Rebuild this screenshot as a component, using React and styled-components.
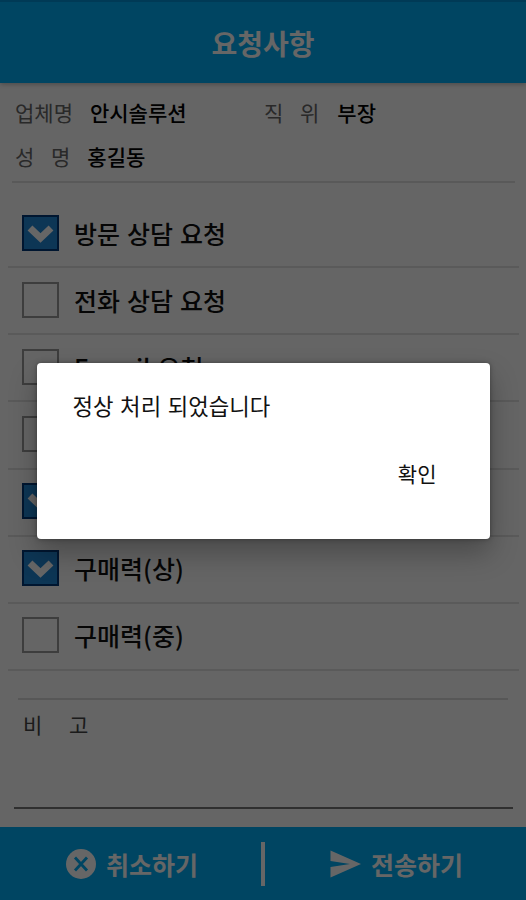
import React, { useState } from 'react'
import styled, { createGlobalStyle } from 'styled-components'

const initialItems = [
    { id: 1, title: '방문 상담 요청', checked: true },
    { id: 2, title: '전화 상담 요청', checked: false },
    { id: 3, title: 'E-mail 요청', checked: false },
    { id: 4, title: '', checked: false },
    { id: 5, title: '', checked: true },
    { id: 6, title: '구매력(상)', checked: true },
    { id: 7, title: '구매력(중)', checked: false },
]

function CheckIcon() {
    return (
        <svg width="28" height="22" viewBox="0 0 28 22">
            <path d="M3 6 L13.5 16 L24 6" fill="none" stroke="#fff" strokeWidth="7" />
        </svg>
    )
}

function CancelIcon() {
    return (
        <svg width="30" height="30" viewBox="0 0 30 30">
            <circle cx="15" cy="15" r="15" fill="#fff" />
            <path d="M9 8.5 L21 21.5 M21 8.5 L9 21.5" stroke="#00acf5" strokeWidth="2.8" />
        </svg>
    )
}

function SendIcon() {
    return (
        <svg width="31" height="28" viewBox="0 0 31 28">
            <path d="M0.5 0.5 L31 14 L0.5 27.5 L0.5 17 L20 14 L0.5 11 Z" fill="#fff" />
        </svg>
    )
}

function App() {
    const [items, setItems] = useState(initialItems)
    const [open, setOpen] = useState(true)

    const toggle = (id) => {
        setItems(items.map((item) => item.id === id ? { ...item, checked: !item.checked } : item))
    }

    return (
        <>
            <GlobalStyle />
            <AppStyled>
                <Header>요청사항</Header>
                <Info>
                    <Field $width="249px">
                        <Label>업체명</Label>
                        <Value $gap="17px">안시솔루션</Value>
                    </Field>
                    <Field>
                        <Label $spread="12px">직 위</Label>
                        <Value $gap="18px">부장</Value>
                    </Field>
                    <Field>
                        <Label $spread="12px">성 명</Label>
                        <Value $gap="17px">홍길동</Value>
                    </Field>
                </Info>
                <List>
                    {items.map((item) => (
                        <Row key={item.id} onClick={() => toggle(item.id)}>
                            <Box $checked={item.checked}>{item.checked && <CheckIcon />}</Box>
                            <span>{item.title}</span>
                        </Row>
                    ))}
                </List>
                <Note>
                    <Label $spread="22px" $dark>비 고</Label>
                </Note>
                <Footer>
                    <Action $left="66px"><CancelIcon />취소하기</Action>
                    <Separator />
                    <Action $left="65px"><SendIcon />전송하기</Action>
                </Footer>
                {open && (
                    <Overlay>
                        <Dialog>
                            <p>정상 처리 되었습니다</p>
                            <button onClick={() => setOpen(false)}>확인</button>
                        </Dialog>
                    </Overlay>
                )}
            </AppStyled>
        </>
    )
}

const GlobalStyle = createGlobalStyle`
    * {
        box-sizing: border-box;
        margin: 0;
        padding: 0;
    }
    body {
        font-family: 'Noto Sans CJK KR', 'Noto Sans', sans-serif;
        background: #fff;
    }
`

const AppStyled = styled.div`
    position: relative;
    width: 526px;
    height: 900px;
    overflow: hidden;
    display: flex;
    flex-direction: column;
    background: #fdfdfd;
`

const Header = styled.header`
    height: 83px;
    flex-shrink: 0;
    display: flex;
    align-items: center;
    justify-content: center;
    border-top: 2px solid #0091d8;
    background: #00acf5;
    color: #fff;
    font-size: 28px;
    font-weight: 700;
    box-shadow: 0 1px 5px rgba(0, 0, 0, 0.3);
`

const Info = styled.section`
    display: flex;
    flex-wrap: wrap;
    align-content: flex-start;
    height: 100px;
    margin: 0 11px 0 12px;
    padding: 7px 0 0 3px;
    border-bottom: 2px solid #dedede;
`

const Field = styled.div`
    display: flex;
    align-items: center;
    height: 44px;
    width: ${({ $width }) => $width || 'auto'};
    &:last-child {
        width: 100%;
    }
`

const Label = styled.span`
    font-size: 21px;
    line-height: 30px;
    white-space: nowrap;
    color: ${({ $dark }) => ($dark ? '#444' : '#666')};
    word-spacing: ${({ $spread }) => $spread || '0'};
`

const Value = styled.strong`
    margin-left: ${({ $gap }) => $gap};
    font-size: 21px;
    line-height: 30px;
    font-weight: 500;
    color: #000;
`

const List = styled.ul`
    list-style: none;
    margin: 18px 7px 0 8px;
`

const Row = styled.li`
    display: flex;
    align-items: center;
    gap: 15px;
    height: 67.15px;
    padding: 0 0 2px 14px;
    border-bottom: 2px solid #e2e2e2;
    font-size: 25px;
    font-weight: 500;
    word-spacing: 1.4px;
    color: #111;
    cursor: pointer;
`

const Box = styled.span`
    display: flex;
    align-items: center;
    justify-content: center;
    width: 37px;
    height: 36px;
    border: 2px solid ${({ $checked }) => ($checked ? '#003878' : '#999')};
    background: ${({ $checked }) => ($checked ? '#2288d4' : 'transparent')};
`

const Note = styled.section`
    flex: 1;
    margin: 27px 13px 18px 14px;
    border-bottom: 2px solid #777;
    &::before {
        content: '';
        display: block;
        height: 2px;
        margin: 0 5px 9px 4px;
        background: #dadada;
    }
    ${Label} {
        margin-left: 9px;
    }
`

const Footer = styled.footer`
    display: flex;
    align-items: center;
    height: 73px;
    flex-shrink: 0;
    background: #00acf5;
`

const Action = styled.div`
    width: 261px;
    display: flex;
    align-items: center;
    gap: 10px;
    padding-left: ${({ $left }) => $left};
    color: #fff;
    font-size: 25px;
    font-weight: 700;
    cursor: pointer;
`

const Separator = styled.div`
    width: 4px;
    height: 44px;
    background: #fff;
`

const Overlay = styled.div`
    position: absolute;
    inset: 0;
    display: flex;
    align-items: flex-start;
    justify-content: center;
    padding-top: 363px;
    background: rgba(0, 0, 0, 0.6);
`

const Dialog = styled.div`
    display: flex;
    flex-direction: column;
    width: 453px;
    height: 176px;
    padding: 26px 53px 0 36px;
    border-radius: 4px;
    background: #fff;
    box-shadow: 0 14px 28px rgba(0, 0, 0, 0.28), 0 0 5px rgba(0, 0, 0, 0.35);
    p {
        font-size: 22.3px;
        line-height: 32px;
        word-spacing: 1.6px;
        color: #111;
    }
    button {
        align-self: flex-end;
        margin-top: 36px;
        border: none;
        background: none;
        font: inherit;
        font-size: 21px;
        line-height: 32px;
        color: #111;
        cursor: pointer;
    }
`

export default App
